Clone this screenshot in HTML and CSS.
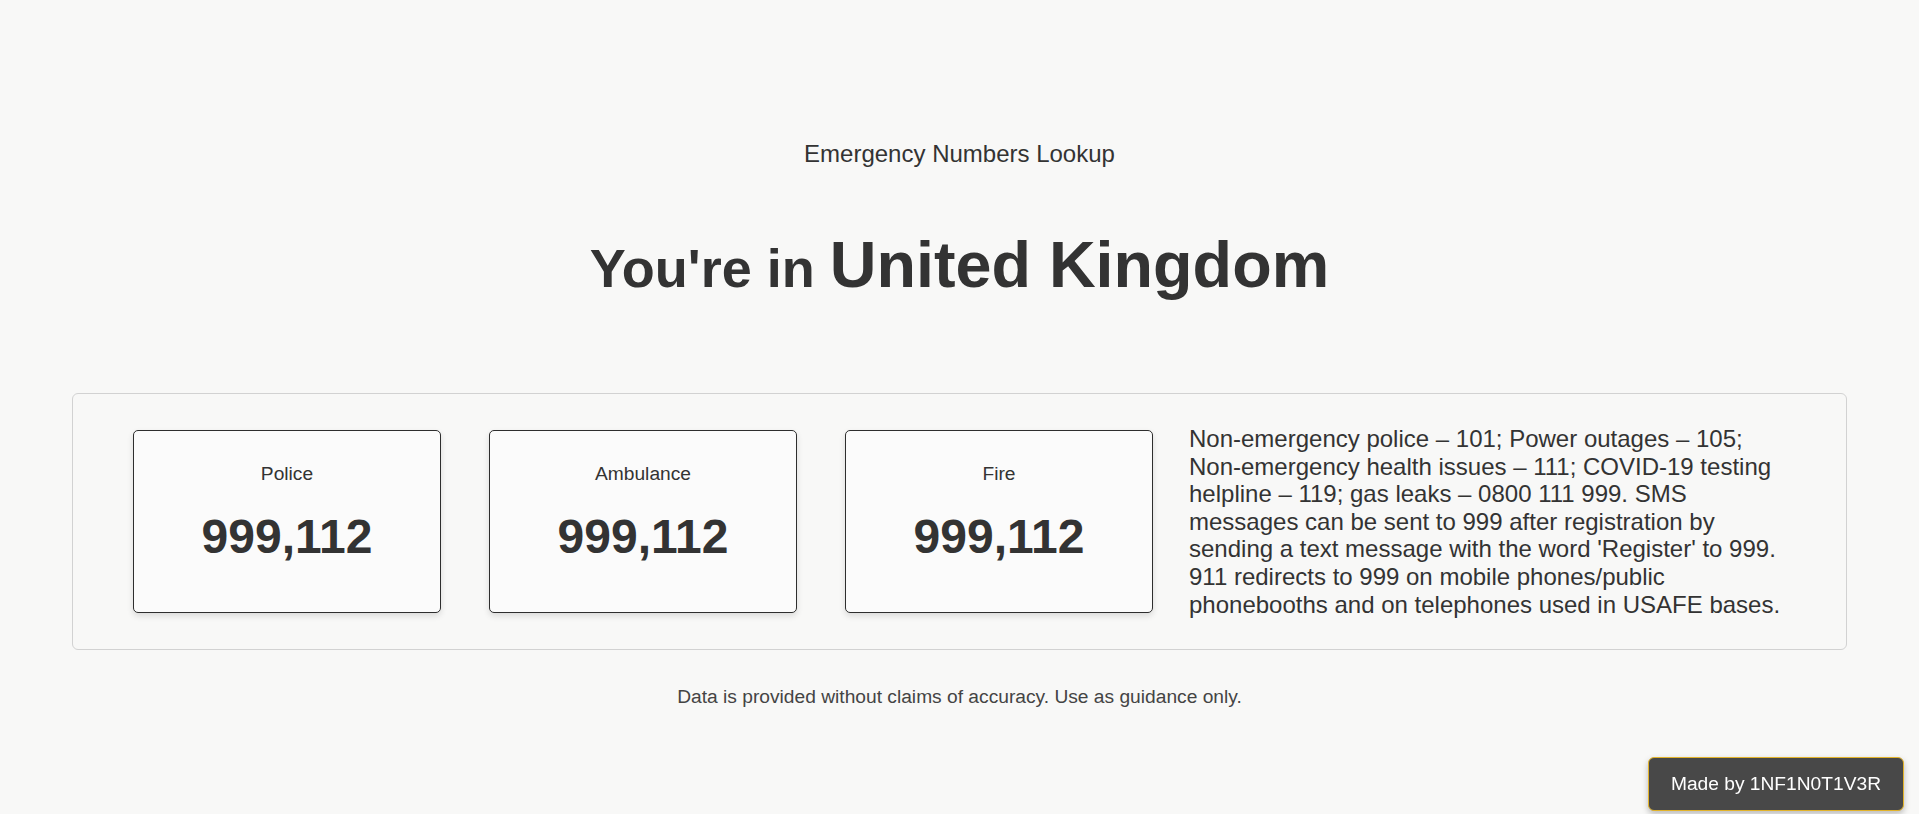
FILE: index.html
```html
<!DOCTYPE html>
<html lang="en">
<head>
<meta charset="utf-8">
<title>Emergency Numbers Lookup</title>
<link rel="stylesheet" href="styles.css">
</head>
<body>
<main class="page">
  <p class="app-name">Emergency Numbers Lookup</p>
  <h1 class="title">You're in <span class="country">United Kingdom</span></h1>
  <section class="panel">
    <div class="cards">
      <div class="card">
        <div class="card-label">Police</div>
        <div class="card-number">999,112</div>
      </div>
      <div class="card">
        <div class="card-label">Ambulance</div>
        <div class="card-number">999,112</div>
      </div>
      <div class="card">
        <div class="card-label">Fire</div>
        <div class="card-number">999,112</div>
      </div>
    </div>
    <p class="notes">Non-emergency police – 101; Power outages – 105; Non&#8209;emergency health issues – 111; COVID-19 testing helpline – 119; gas leaks – 0800 111 999. SMS messages can be sent to 999 after registration by sending a text message with the word 'Register' to 999. 911 redirects to 999 on mobile phones/public phonebooths and on telephones used in USAFE bases.</p>
  </section>
  <p class="disclaimer">Data is provided without claims of accuracy. Use as guidance only.</p>
</main>
<div class="badge">Made by 1NF1N0T1V3R</div>
</body>
</html>
```

FILE: styles.css
```css
html, body {
  margin: 0;
  padding: 0;
  background: #f8f8f7;
  color: #333333;
  font-family: "Liberation Sans", Arial, sans-serif;
}

.page {
  padding-top: 140px;
  display: flex;
  flex-direction: column;
}

.app-name {
  margin: 0;
  font-size: 24px;
  line-height: 28px;
  text-align: center;
  color: #333333;
}

.title {
  margin: 57px 0 0;
  font-size: 54px;
  line-height: 80px;
  font-weight: bold;
  text-align: center;
  color: #333333;
}

.country {
  font-size: 64.7px;
}

.panel {
  margin: 85px 72px 0;
  border: 1px solid #d2d2d2;
  border-radius: 6px;
  padding: 31px 60px;
  display: flex;
  align-items: center;
  gap: 36px;
}

.cards {
  display: flex;
  gap: 48px;
  flex: none;
}

.card {
  box-sizing: border-box;
  width: 308px;
  height: 183px;
  border: 1px solid #2e2e2e;
  border-radius: 5px;
  background: #fbfbfb;
  box-shadow: 0 3px 6px rgba(0, 0, 0, 0.12);
  padding-top: 32px;
  display: flex;
  flex-direction: column;
  align-items: center;
  gap: 24px;
}

.card-label {
  font-size: 19.2px;
  line-height: 22px;
  color: #333333;
}

.card-number {
  font-size: 48px;
  line-height: 56px;
  font-weight: bold;
  color: #333333;
}

.notes {
  flex: 1;
  margin: 0;
  font-size: 24px;
  line-height: 27.6px;
  color: #333333;
}

.disclaimer {
  margin: 36px 0 0;
  font-size: 19.2px;
  line-height: 22px;
  text-align: center;
  color: #444444;
}

.badge {
  position: fixed;
  right: 15px;
  bottom: 3px;
  box-sizing: border-box;
  height: 54px;
  padding: 0 22px;
  display: flex;
  align-items: center;
  background: #484848;
  color: #ffffff;
  border: 1px solid #e2b32a;
  border-radius: 6px;
  font-size: 19.2px;
  box-shadow: 0 3px 6px rgba(0, 0, 0, 0.25);
}
```
